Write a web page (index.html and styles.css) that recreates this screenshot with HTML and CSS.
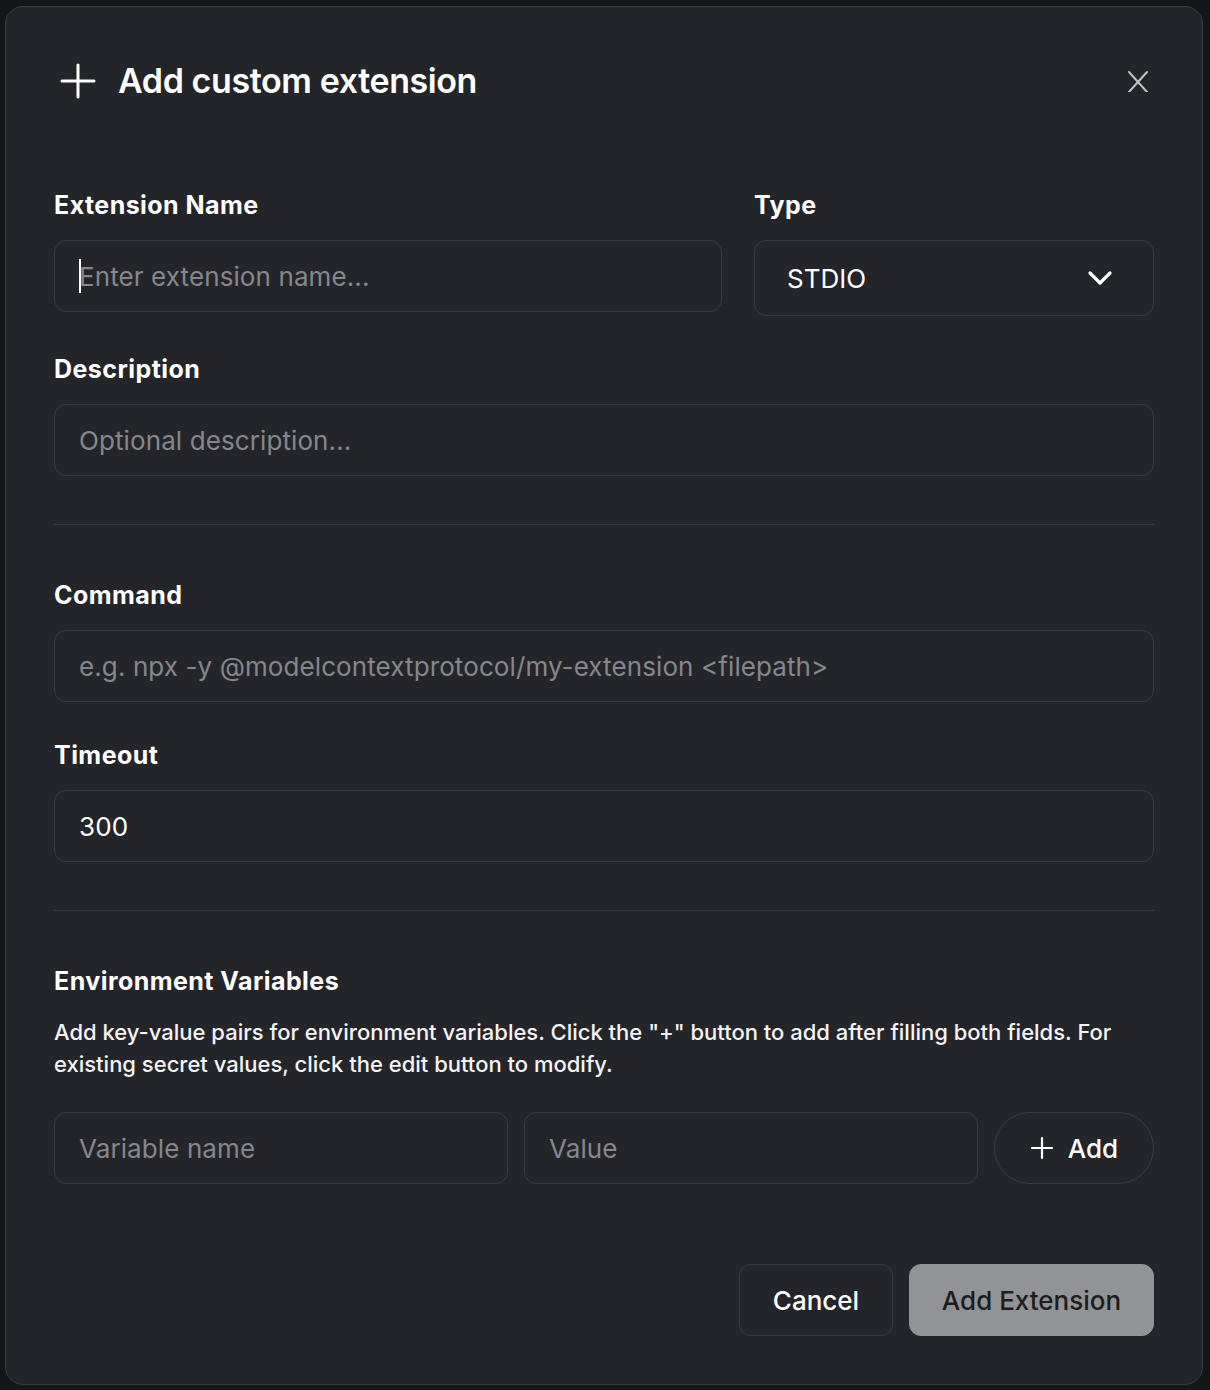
FILE: index.html
```html
<!DOCTYPE html>
<html lang="en">
<head>
<meta charset="utf-8">
<title>Add custom extension</title>
<link rel="stylesheet" href="styles.css">
</head>
<body>
<div class="backdrop">
  <div class="modal">
    <header class="modal-header">
      <h1 class="title">
        <svg class="title-icon" width="40" height="40" viewBox="0 0 40 40" aria-hidden="true">
          <path d="M20 4v32M4 20h32" stroke="#ffffff" stroke-width="3" stroke-linecap="round" fill="none"/>
        </svg>
        <span>Add custom extension</span>
      </h1>
      <button class="close-btn" aria-label="Close">
        <svg width="22" height="22" viewBox="0 0 22 22" aria-hidden="true">
          <path d="M2 2l18 20M20 2L2 22" stroke="#c2c3c6" stroke-width="2" stroke-linecap="round" fill="none"/>
        </svg>
      </button>
    </header>

    <section class="row-two">
      <div class="field">
        <label class="label">Extension Name</label>
        <div class="input-wrap">
          <input class="input" type="text" placeholder="Enter extension name...">
          <span class="caret"></span>
        </div>
      </div>
      <div class="field">
        <label class="label">Type</label>
        <div class="select">
          <span>STDIO</span>
          <svg width="26" height="16" viewBox="0 0 26 16" aria-hidden="true">
            <path d="M3 3l10 10L23 3" stroke="#ffffff" stroke-width="3.2" stroke-linecap="round" stroke-linejoin="round" fill="none"/>
          </svg>
        </div>
      </div>
    </section>

    <div class="field spaced">
      <label class="label">Description</label>
      <input class="input" type="text" placeholder="Optional description...">
    </div>

    <hr class="divider">

    <div class="field">
      <label class="label">Command</label>
      <input class="input" type="text" placeholder="e.g. npx -y @modelcontextprotocol/my-extension &lt;filepath&gt;">
    </div>

    <div class="field spaced">
      <label class="label">Timeout</label>
      <input class="input value" type="text" value="300">
    </div>

    <hr class="divider">

    <div class="field">
      <label class="label">Environment Variables</label>
      <p class="help">Add key-value pairs for environment variables. Click the "+" button to add after filling both fields. For existing secret values, click the edit button to modify.</p>
      <div class="env-row">
        <input class="input" type="text" placeholder="Variable name">
        <input class="input" type="text" placeholder="Value">
        <button class="add-btn">
          <svg width="24" height="24" viewBox="0 0 24 24" aria-hidden="true">
            <path d="M12 2v20M2 12h20" stroke="#ffffff" stroke-width="2.2" stroke-linecap="round" fill="none"/>
          </svg>
          <span>Add</span>
        </button>
      </div>
    </div>

    <footer class="actions">
      <button class="btn btn-cancel">Cancel</button>
      <button class="btn btn-primary">Add Extension</button>
    </footer>
  </div>
</div>
</body>
</html>
```
FILE: styles.css
```css
* { box-sizing: border-box; }

html, body {
  margin: 0;
  padding: 0;
  background: #141519;
  font-family: Inter, "Noto Sans", "Liberation Sans", sans-serif;
  color: #f4f4f5;
}

.backdrop {
  width: 1210px;
  height: 1390px;
  padding: 6px 0 0 5px;
  overflow: hidden;
}

.modal {
  width: 1198px;
  background: #24252a;
  border: 1px solid #3a3b40;
  border-radius: 18px;
  padding: 54px 48px 48px 48px;
  display: flex;
  flex-direction: column;
}

.modal-header {
  display: flex;
  align-items: center;
  justify-content: space-between;
  height: 40px;
  margin-bottom: 88px;
}

.title {
  margin: 0;
  display: flex;
  align-items: center;
  gap: 20px;
  font-size: 34px;
  font-weight: 600;
  letter-spacing: -0.4px;
  line-height: 40px;
  color: #ffffff;
}

.title-icon { margin-left: 4px; }

.close-btn {
  background: none;
  border: 0;
  padding: 0;
  margin-right: 5px;
  width: 22px;
  height: 22px;
  display: flex;
  cursor: pointer;
}

.row-two {
  display: grid;
  grid-template-columns: 1fr 400px;
  column-gap: 32px;
  align-items: start;
}

.field {
  display: flex;
  flex-direction: column;
}

.field.spaced { margin-top: 37px; }

.label {
  font-size: 25px;
  font-weight: 700;
  line-height: 32px;
  letter-spacing: 0.45px;
  color: #ffffff;
  margin-bottom: 19px;
}

.input-wrap { position: relative; }

.input {
  width: 100%;
  height: 72px;
  background: #24252a;
  border: 1px solid #3a3b40;
  border-radius: 12px;
  padding: 0 24px;
  font-family: inherit;
  font-size: 26px;
  letter-spacing: 0.1px;
  color: #ffffff;
  outline: none;
}

.input::placeholder { color: #86878c; opacity: 1; }

.caret {
  position: absolute;
  left: 25px;
  top: 19px;
  width: 2px;
  height: 34px;
  background: #ffffff;
}

.select {
  height: 76px;
  border: 1px solid #3a3b40;
  border-radius: 12px;
  padding: 0 40px 0 32px;
  display: flex;
  align-items: center;
  justify-content: space-between;
  font-size: 26px;
  font-weight: 400;
  color: #ffffff;
}

.divider {
  border: 0;
  border-top: 1px solid #36373c;
  margin: 48px 0 54px 0;
  height: 0;
}

.help {
  margin: 0 0 32px 0;
  font-size: 22px;
  line-height: 32px;
  font-weight: 500;
  color: #f4f4f5;
  letter-spacing: 0;
}

.env-row {
  display: flex;
  gap: 16px;
}

.env-row .input { flex: 1; min-width: 0; }

.add-btn {
  flex: 0 0 160px;
  height: 72px;
  border: 1px solid #3a3b40;
  border-radius: 36px;
  background: transparent;
  color: #ffffff;
  font-family: inherit;
  font-size: 26px;
  font-weight: 500;
  display: flex;
  align-items: center;
  justify-content: center;
  gap: 14px;
  padding: 0;
}

.actions {
  margin-top: 80px;
  display: flex;
  justify-content: flex-end;
  gap: 16px;
}

.btn {
  height: 72px;
  border-radius: 12px;
  font-family: inherit;
  font-size: 26px;
  font-weight: 500;
  padding: 0;
  white-space: nowrap;
  cursor: pointer;
}

.btn-cancel {
  width: 154px;
  background: transparent;
  border: 1px solid #3a3b40;
  color: #ffffff;
}

.btn-primary {
  width: 245px;
  background: #929396;
  border: 1px solid #929396;
  color: #1c1d21;
}
```
